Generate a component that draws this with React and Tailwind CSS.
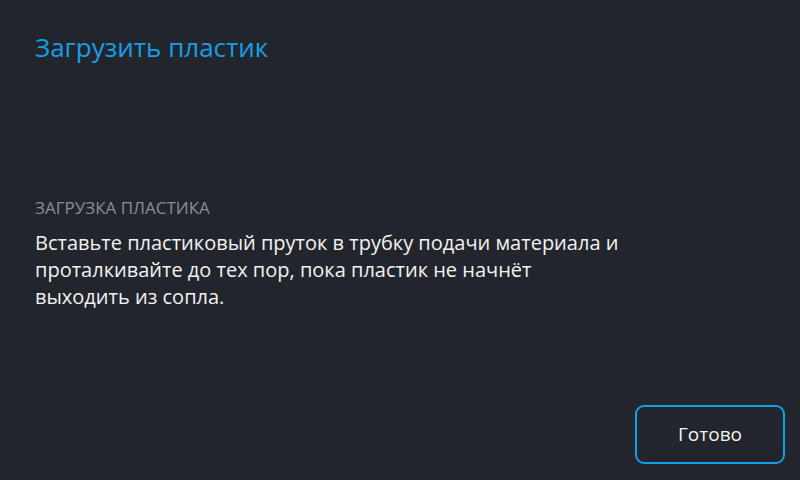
export default function App() {
  return (
    <div
      className="w-[800px] h-[480px] bg-[#22252c] flex flex-col overflow-hidden"
      style={{ fontFamily: '"Open Sans", "Noto Sans", sans-serif' }}
    >
      <div className="px-[35px] pt-[29px]">
        <h1 className="text-[26px] leading-[36px] text-[#189ee6]">Загрузить пластик</h1>
      </div>

      <div className="px-[35px] pt-[132px] flex-1">
        <div className="text-[17px] leading-[22px] text-[#8b8d91] uppercase">Загрузка пластика</div>
        <p className="mt-[10px] w-[585px] text-[20px] leading-[27px] text-[#f2f2f2]">
          Вставьте пластиковый пруток в трубку подачи материала и проталкивайте до тех пор, пока пластик не начнёт выходить из сопла.
        </p>
      </div>

      <div className="flex justify-end px-[15px] pb-[16px]">
        <button className="w-[150px] h-[59px] rounded-[9px] border-2 border-[#159de8] text-[19px] text-[#f2f2f2]">
          Готово
        </button>
      </div>
    </div>
  );
}
